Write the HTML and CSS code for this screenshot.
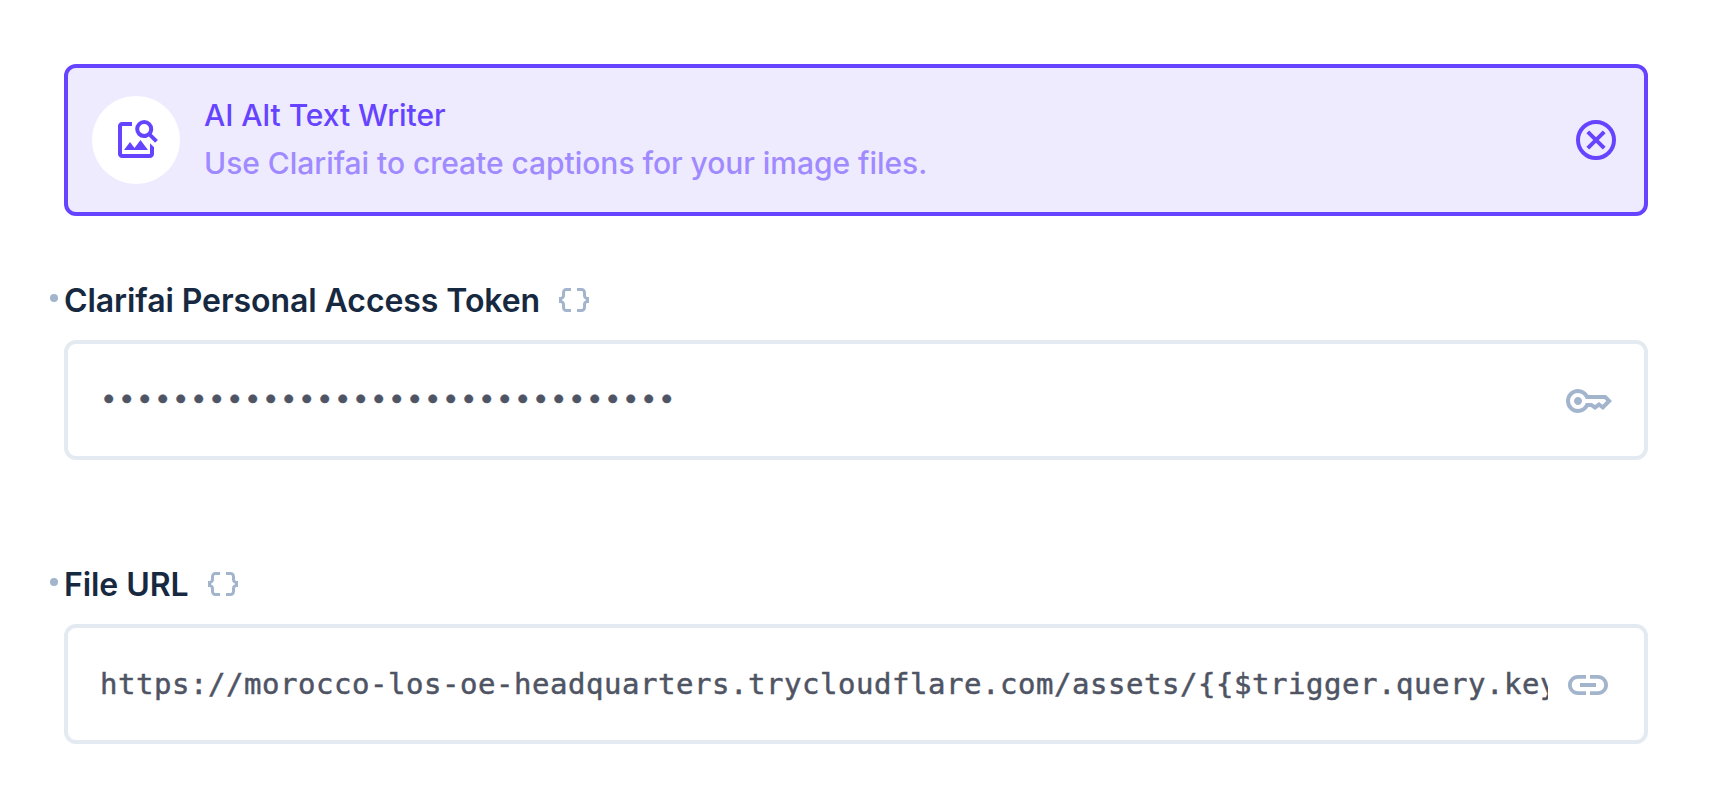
FILE: index.html
```html
<!DOCTYPE html>
<html lang="en">
<head>
<meta charset="utf-8">
<title>AI Alt Text Writer</title>
<link rel="stylesheet" href="styles.css">
</head>
<body>
<main class="form">
  <section class="operation">
    <div class="operation-icon">
      <svg class="icon" viewBox="0 -960 960 960"><path d="M200-120q-33 0-56.5-23.5T120-200v-560q0-33 23.5-56.5T200-840h200v80H200v560h560v-214l80 80v134q0 33-23.5 56.5T760-120H200Zm40-160 120-160 90 120 120-160 150 200H240Zm622-144L738-548q-21 14-45 21t-51 7q-74 0-126-52.5T464-700q0-75 52.5-127.5T644-880q75 0 127.5 52.5T824-700q0 27-8 52t-20 46l122 122-56 56ZM644-600q42 0 71-29t29-71q0-42-29-71t-71-29q-42 0-71 29t-29 71q0 42 29 71t71 29Z"/></svg>
    </div>
    <div class="operation-text">
      <div class="operation-title">AI Alt Text Writer</div>
      <div class="operation-description">Use Clarifai to create captions for your image files.</div>
    </div>
    <svg class="icon icon-stroke" viewBox="0 0 24 24"><circle cx="12" cy="12" r="9"/><path d="M7.900 7.900 16.100 16.100M16.100 7.900 7.900 16.100"/></svg>
  </section>

  <section class="field">
    <div class="label">
      <span class="required"></span>
      <span class="label-text">Clarifai Personal Access Token</span>
      <svg class="raw" viewBox="0 0 24 24"><path d="M4 7v2c0 .55-.45 1-1 1H2v4h1c.55 0 1 .45 1 1v2c0 1.650 1.350 3 3 3h3v-2H7c-.55 0-1-.45-1-1v-2c0-1.300-.84-2.420-2-2.830v-.340C5.160 11.420 6 10.300 6 9V7c0-.55.45-1 1-1h3V4H7C5.350 4 4 5.350 4 7zM21 10c-.55 0-1-.45-1-1V7c0-1.650-1.350-3-3-3h-3v2h3c.55 0 1 .45 1 1v2c0 1.300.84 2.420 2 2.830v.340c-1.160.41-2 1.520-2 2.830v2c0 .55-.45 1-1 1h-3v2h3c1.650 0 3-1.350 3-3v-2c0-.55.45-1 1-1h1v-4z"/></svg>
    </div>
    <div class="input">
      <div class="value value-masked">••••••••••••••••••••••••••••••••</div>
      <svg class="icon" viewBox="0 -960 960 960"><path d="M280-400q-33 0-56.500-23.500T200-480q0-33 23.500-56.500T280-560q33 0 56.500 23.500T360-480q0 33-23.500 56.500T280-400Zm0 160q-100 0-170-70T40-480q0-100 70-170t170-70q67 0 121.500 33t86.500 87h352l120 120-180 180-80-60-80 60-85-60h-47q-32 54-86.500 87T280-240Zm0-80q56 0 98.500-34t56.500-86h125l58 41 82-61 71 55 75-75-40-40H435q-14-52-56.500-86T280-640q-66 0-113 47t-47 113q0 66 47 113t113 47Z"/></svg>
    </div>
  </section>

  <section class="field">
    <div class="label">
      <span class="required"></span>
      <span class="label-text">File URL</span>
      <svg class="raw" viewBox="0 0 24 24"><path d="M4 7v2c0 .55-.45 1-1 1H2v4h1c.55 0 1 .45 1 1v2c0 1.650 1.350 3 3 3h3v-2H7c-.55 0-1-.45-1-1v-2c0-1.300-.84-2.420-2-2.830v-.340C5.160 11.420 6 10.300 6 9V7c0-.55.45-1 1-1h3V4H7C5.350 4 4 5.350 4 7zM21 10c-.55 0-1-.45-1-1V7c0-1.650-1.350-3-3-3h-3v2h3c.55 0 1 .45 1 1v2c0 1.300.84 2.420 2 2.830v.340c-1.160.41-2 1.520-2 2.830v2c0 .55-.45 1-1 1h-3v2h3c1.650 0 3-1.350 3-3v-2c0-.55.45-1 1-1h1v-4z"/></svg>
    </div>
    <div class="input">
      <div class="value">https://morocco-los-oe-headquarters.trycloudflare.com/assets/{{$trigger.query.key</div>
      <svg class="icon" viewBox="0 0 24 24"><path d="M3.900 12c0-1.710 1.390-3.100 3.100-3.100h4V7H7c-2.760 0-5 2.240-5 5s2.240 5 5 5h4v-1.900H7c-1.710 0-3.100-1.390-3.100-3.100zM8 13h8v-2H8v2zm9-6h-4v1.900h4c1.710 0 3.100 1.390 3.100 3.100s-1.390 3.100-3.100 3.100h-4V17h4c2.760 0 5-2.240 5-5s-2.240-5-5-5z"/></svg>
    </div>
  </section>
</main>
</body>
</html>
```

FILE: styles.css
```css
* {
  box-sizing: border-box;
}

body {
  margin: 0;
  background: #fff;
  font-family: Inter, "Liberation Sans", sans-serif;
}

.form {
  padding: 64px;
}

.icon {
  flex: none;
  width: 48px;
  height: 48px;
  fill: currentColor;
}

.icon-stroke {
  fill: none;
  stroke: currentColor;
  stroke-width: 2;
}

.operation {
  display: flex;
  align-items: center;
  gap: 24px;
  height: 152px;
  padding: 0 24px;
  margin-bottom: 66px;
  border: 4px solid #6644ff;
  border-radius: 12px;
  background: #efebff;
  color: #6644ff;
}

.operation-icon {
  display: flex;
  flex: none;
  align-items: center;
  justify-content: center;
  width: 88px;
  height: 88px;
  border-radius: 50%;
  background: #fff;
}

.operation-text {
  flex: 1;
  padding-bottom: 2px;
  font-size: 30px;
  font-weight: 500;
  letter-spacing: -0.04px;
  line-height: 48px;
  white-space: nowrap;
}

.operation-description {
  color: #a08aff;
}

.field {
  margin-bottom: 106px;
}

.field:last-child {
  margin-bottom: 0;
}

.label {
  display: flex;
  align-items: center;
  height: 36px;
  margin: 0 0 22px -14px;
}

.required {
  width: 8px;
  height: 8px;
  margin: 0 6px 4px 0;
  border-radius: 50%;
  background: #a2b5cd;
}

.label-text {
  padding-top: 2px;
  color: #172940;
  font-size: 32px;
  font-weight: 600;
  letter-spacing: -0.07px;
  line-height: 36px;
}

.raw {
  width: 36px;
  height: 36px;
  margin-left: 16px;
  fill: #a2b5cd;
}

.input {
  display: flex;
  align-items: center;
  gap: 16px;
  height: 120px;
  padding: 0 32px;
  border: 4px solid #e4eaf1;
  border-radius: 12px;
  color: #a2b5cd;
}

.input .icon {
  margin-top: 2px;
}

.value {
  flex: 1;
  min-width: 0;
  overflow: hidden;
  color: #4f5464;
  font-family: "DejaVu Sans Mono", monospace;
  font-size: 29px;
  letter-spacing: 0.54px;
  line-height: 48px;
  white-space: nowrap;
  -webkit-text-stroke: 0.5px #4f5464;
}

.value-masked {
  padding-bottom: 2px;
}
```
